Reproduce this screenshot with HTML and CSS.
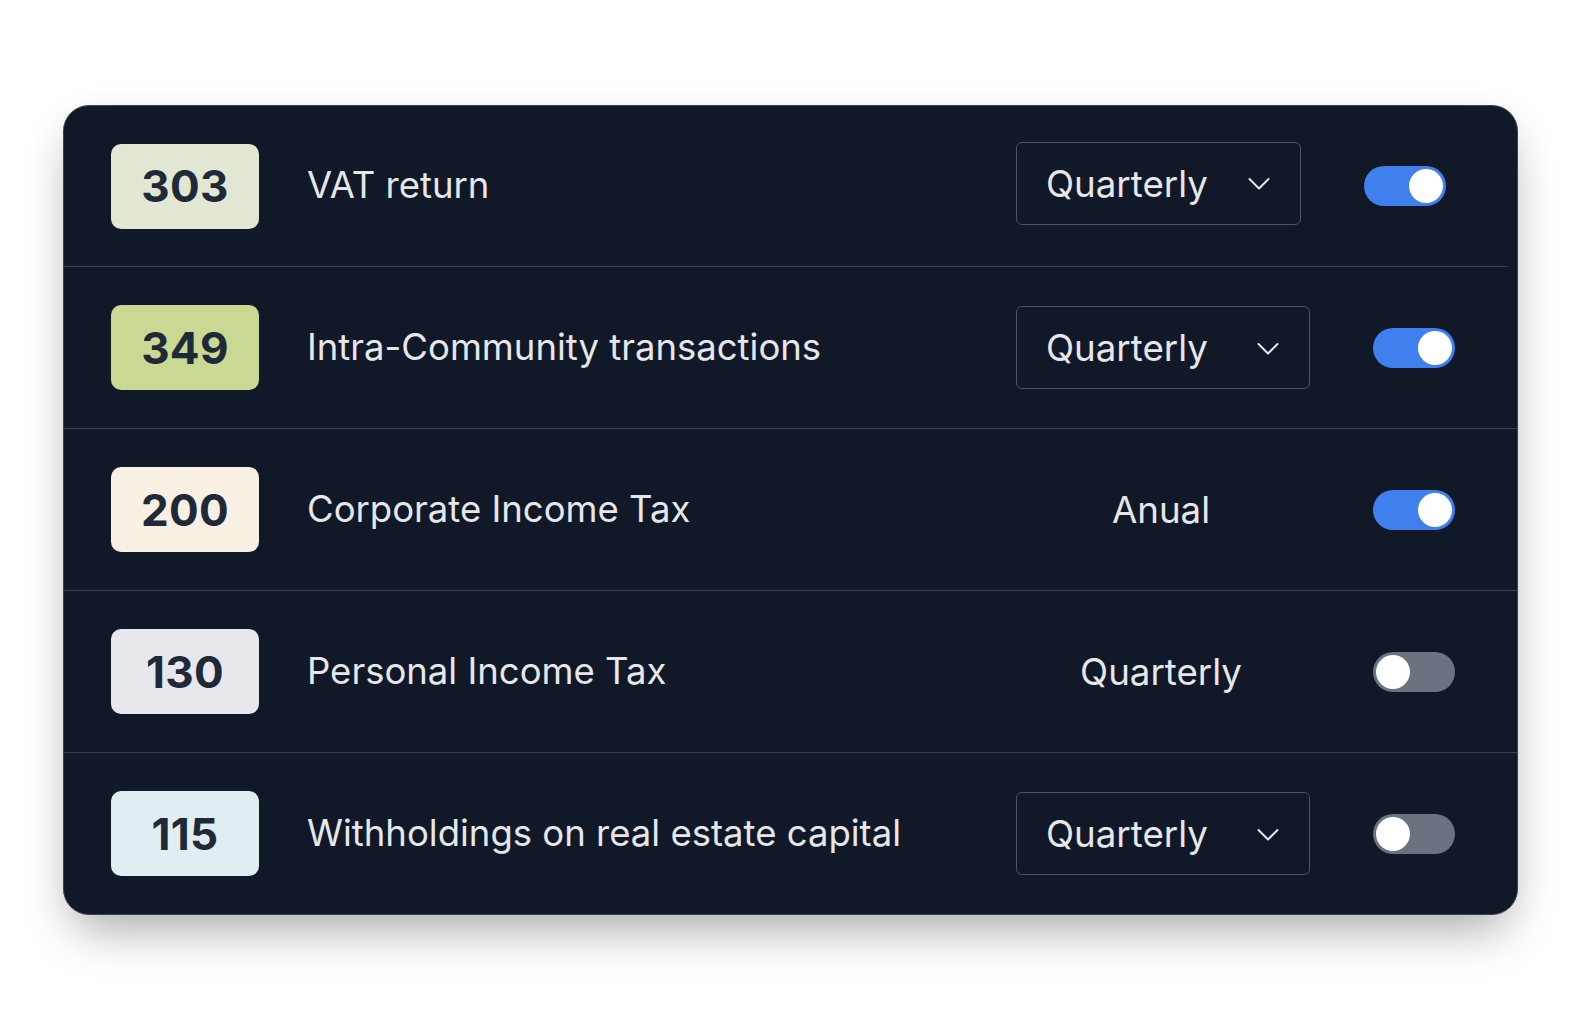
FILE: index.html
```html
<!DOCTYPE html>
<html lang="en">
<head>
<meta charset="utf-8">
<title>Tax models</title>
<link rel="stylesheet" href="styles.css">
</head>
<body>
<div class="page">
<div class="card">
  <div class="row row--first">
    <div class="badge badge--sage">303</div>
    <div class="label">VAT return</div>
    <div class="freq">
      <div class="select"><span>Quarterly</span>
        <svg class="chev" width="22" height="14" viewBox="0 0 22 14"><polyline points="1.5,2 11,11.5 20.5,2" fill="none" stroke="#e5e7eb" stroke-width="2" stroke-linecap="round" stroke-linejoin="round"/></svg>
      </div>
    </div>
    <div class="toggle toggle--on"><span class="knob"></span></div>
  </div>
  <div class="row">
    <div class="badge badge--lime">349</div>
    <div class="label">Intra-Community transactions</div>
    <div class="freq">
      <div class="select"><span>Quarterly</span>
        <svg class="chev" width="22" height="14" viewBox="0 0 22 14"><polyline points="1.5,2 11,11.5 20.5,2" fill="none" stroke="#e5e7eb" stroke-width="2" stroke-linecap="round" stroke-linejoin="round"/></svg>
      </div>
    </div>
    <div class="toggle toggle--on"><span class="knob"></span></div>
  </div>
  <div class="row">
    <div class="badge badge--cream">200</div>
    <div class="label">Corporate Income Tax</div>
    <div class="freq"><span class="plain">Anual</span></div>
    <div class="toggle toggle--on"><span class="knob"></span></div>
  </div>
  <div class="row">
    <div class="badge badge--gray">130</div>
    <div class="label">Personal Income Tax</div>
    <div class="freq"><span class="plain">Quarterly</span></div>
    <div class="toggle"><span class="knob"></span></div>
  </div>
  <div class="row">
    <div class="badge badge--sky">115</div>
    <div class="label">Withholdings on real estate capital</div>
    <div class="freq">
      <div class="select"><span>Quarterly</span>
        <svg class="chev" width="22" height="14" viewBox="0 0 22 14"><polyline points="1.5,2 11,11.5 20.5,2" fill="none" stroke="#e5e7eb" stroke-width="2" stroke-linecap="round" stroke-linejoin="round"/></svg>
      </div>
    </div>
    <div class="toggle"><span class="knob"></span></div>
  </div>
</div>
</div>
</body>
</html>
```
FILE: styles.css
```css
* { box-sizing: border-box; }

html, body {
  margin: 0;
  padding: 0;
  background: #ffffff;
}

body {
  font-family: Inter, "Liberation Sans", Arial, sans-serif;
  color: #e5e7eb;
}

.page {
  min-height: 1020px;
  padding: 105px 0 106px 63px;
}

.card {
  width: 1455px;
  background: #111827;
  border: 1px solid #3b4352;
  border-radius: 26px;
  box-shadow: 0 26px 50px -12px rgba(0, 0, 0, 0.30), 0 8px 40px rgba(0, 0, 0, 0.06);
  overflow: hidden;
}

.row {
  display: flex;
  align-items: center;
  height: 162px;
  padding: 0 62px 0 47px;
  border-bottom: 1px solid #374151;
}

.row:last-child {
  border-bottom: none;
  height: 161px;
}

.row--first {
  margin-right: 9px;
  height: 161px;
}

.badge {
  flex: none;
  width: 148px;
  height: 85px;
  border-radius: 10px;
  display: flex;
  align-items: center;
  justify-content: center;
  font-size: 44px;
  font-weight: 700;
  color: #1f2937;
  letter-spacing: 0.3px;
}

.badge--sage { background: #e1e7d2; }
.badge--lime { background: #c9d893; }
.badge--cream { background: #f8f0e3; }
.badge--gray { background: #e6e8ee; }
.badge--sky { background: #e0eef2; }

.label {
  flex: 1;
  margin-left: 48px;
  margin-bottom: 2px;
  font-size: 36.5px;
  font-weight: 400;
  color: #e5e7eb;
  white-space: nowrap;
}

.freq {
  flex: none;
  width: 294px;
  display: flex;
  justify-content: center;
  align-items: center;
}

.row--first .freq {
  width: 285px;
  margin-bottom: 6px;
}

.select {
  width: 100%;
  height: 83px;
  border: 1px solid #4b5563;
  border-radius: 6px;
  display: flex;
  align-items: center;
  justify-content: space-between;
  padding: 0 30px 0 29px;
  font-size: 36.7px;
  color: #e5e7eb;
}

.chev {
  display: block;
  margin-top: 2px;
}

.plain {
  font-size: 36.7px;
  color: #e5e7eb;
  margin-right: 4px;
}

.toggle {
  flex: none;
  margin-left: 63px;
  width: 82px;
  height: 40px;
  border-radius: 20px;
  background: #6b7280;
  position: relative;
}

.toggle--on {
  background: #3f80ee;
}

.knob {
  position: absolute;
  top: 3px;
  left: 3px;
  width: 34px;
  height: 34px;
  border-radius: 50%;
  background: #ffffff;
}

.toggle--on .knob {
  left: 45px;
}
```
